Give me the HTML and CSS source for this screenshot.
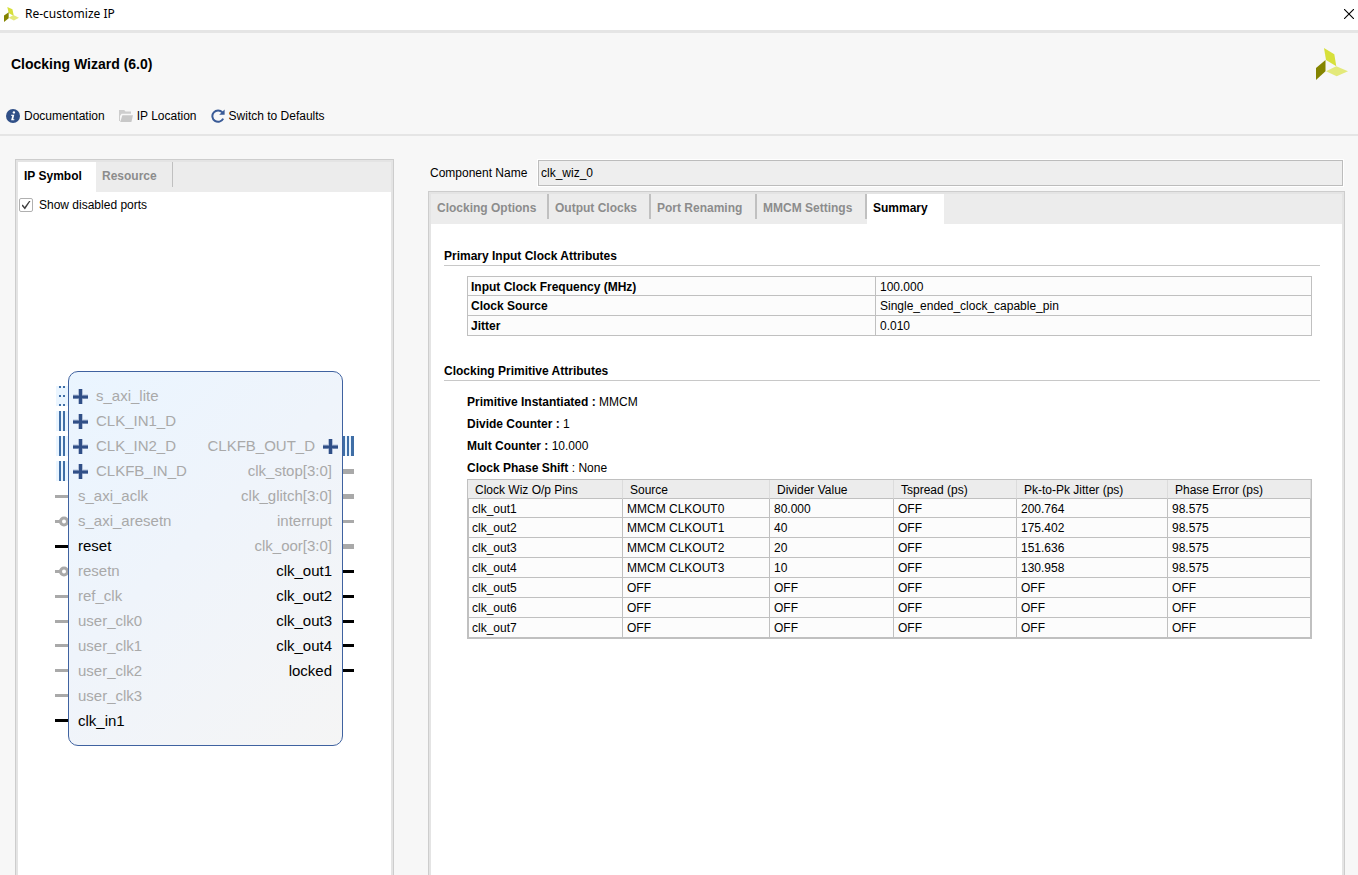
FILE: index.html
```html
<!DOCTYPE html>
<html lang="en">
<head>
<meta charset="utf-8">
<title>Re-customize IP</title>
<link rel="stylesheet" href="styles.css">
</head>
<body>
<div class="dialog">
  <div class="titlebar">
    <svg class="titlebar-logo" viewBox="0 0 32 32" aria-hidden="true">
      <polygon fill="#d7e03b" points="7,0 18,5 21,19 10,13"/>
      <polygon fill="#848400" points="0,18 10,11 10,24 0,32"/>
      <polygon fill="#e3e97a" points="10,23 20,17 32,23 21,29"/>
    </svg>
    <span class="titlebar-text">Re-customize IP</span>
    <button class="close" type="button" aria-label="Close">
      <svg viewBox="0 0 10 10" width="10" height="10"><path d="M0 0L10 10M10 0L0 10" stroke="#000" stroke-width="1.1" fill="none"/></svg>
    </button>
  </div>

  <header class="header">
    <div class="header-top">
      <h1 class="title">Clocking Wizard (6.0)</h1>
      <svg class="logo" viewBox="0 0 32 32" aria-hidden="true">
        <polygon fill="#d7e03b" points="8,0 18.3,6.3 20.3,18.3 10,12"/>
        <polygon fill="#848400" points="0,20 9.5,12 9.5,23.3 0,32"/>
        <polygon fill="#e3e97a" points="10,23.3 20.3,18.3 32,23.3 20.7,28.3"/>
      </svg>
    </div>
    <div class="toolbar">
      <button class="tool" type="button">
        <svg viewBox="0 0 14 14" width="14" height="14" aria-hidden="true">
          <circle cx="7" cy="7" r="7" fill="#304f87"/>
          <circle cx="7.9" cy="3.4" r="1.2" fill="#fff"/>
          <path d="M5.2 5.7H8.3L7.2 10.2H8.4L8.2 11.2H5.1L6.3 6.7H5z" fill="#fff"/>
        </svg>
        <span>Documentation</span>
      </button>
      <button class="tool" type="button">
        <svg viewBox="0 0 14 14" width="14" height="14" aria-hidden="true">
          <path d="M0 1H5.2L6.5 2.5H12V4.8H2.6L1 7V12H0z" fill="#cdcdcd"/>
          <path d="M3.4 6.2H14L12.4 13H1.2z" fill="#c8c8c8"/>
        </svg>
        <span>IP Location</span>
      </button>
      <button class="tool" type="button">
        <svg viewBox="0 0 14 14" width="14" height="14" aria-hidden="true">
          <path d="M11.4 3.4A5.7 5.7 0 1 0 12.2 9.6" fill="none" stroke="#3a5b97" stroke-width="2"/>
          <path d="M13.6 0.4V5.8H8.2z" fill="#3a5b97"/>
        </svg>
        <span>Switch to Defaults</span>
      </button>
    </div>
  </header>

  <main class="main">
    <section class="panel side">
      <div class="tabs side-tabs" role="tablist">
        <button class="tab active" type="button" role="tab" aria-selected="true">IP Symbol</button>
        <button class="tab" type="button" role="tab" aria-selected="false">Resource</button>
      </div>
      <div class="show-ports">
        <input class="check" type="checkbox" id="show-disabled" checked>
        <label for="show-disabled">Show disabled ports</label>
      </div>

      <div class="symbol">
        <svg class="pins" viewBox="0 0 13 375" width="13" height="375" aria-hidden="true">
          <g fill="#eaf5ff">
            <rect x="1" y="15" width="12" height="20"/><rect x="1" y="40" width="12" height="20"/>
            <rect x="1" y="65" width="12" height="20"/><rect x="1" y="90" width="12" height="20"/>
          </g>
          <g fill="#3f6ea6">
            <rect x="4" y="15" width="2" height="2"/><rect x="8" y="15" width="2" height="2"/>
            <rect x="4" y="24" width="2" height="2"/><rect x="8" y="24" width="2" height="2"/>
            <rect x="4" y="33" width="2" height="2"/><rect x="8" y="33" width="2" height="2"/>
            <rect x="4" y="40" width="2" height="20"/><rect x="8" y="40" width="2" height="20"/>
            <rect x="4" y="65" width="2" height="20"/><rect x="8" y="65" width="2" height="20"/>
            <rect x="4" y="90" width="2" height="20"/><rect x="8" y="90" width="2" height="20"/>
          </g>
          <g fill="#a9a9a9">
            <rect y="124" width="13" height="3"/><rect y="149" width="5" height="3"/>
            <rect y="199" width="5" height="3"/><rect y="224" width="13" height="3"/>
            <rect y="249" width="13" height="3"/><rect y="273" width="13" height="3"/>
            <rect y="298" width="13" height="3"/><rect y="323" width="13" height="3"/>
          </g>
          <g fill="#fff" stroke="#a9a9a9" stroke-width="3">
            <circle cx="9" cy="150.5" r="3.5"/><circle cx="9" cy="200.5" r="3.5"/>
          </g>
          <rect y="174" width="13" height="3"/><rect y="348" width="13" height="3"/>
        </svg>
        <div class="block">
          <ul class="ports">
            <li class="port bus"><svg class="plus" viewBox="0 0 15 15"><path d="M5 0H10V15H5z" fill="#b4c2da"/><path d="M0 5.5H15V10H0z" fill="#b4c2da"/><path d="M6 0H9V15H6zM0 6.5H15V9.5H0z" fill="#304f87"/></svg><span>s_axi_lite</span></li>
            <li class="port bus"><svg class="plus" viewBox="0 0 15 15"><path d="M5 0H10V15H5z" fill="#b4c2da"/><path d="M0 5.5H15V10H0z" fill="#b4c2da"/><path d="M6 0H9V15H6zM0 6.5H15V9.5H0z" fill="#304f87"/></svg><span>CLK_IN1_D</span></li>
            <li class="port bus"><svg class="plus" viewBox="0 0 15 15"><path d="M5 0H10V15H5z" fill="#b4c2da"/><path d="M0 5.5H15V10H0z" fill="#b4c2da"/><path d="M6 0H9V15H6zM0 6.5H15V9.5H0z" fill="#304f87"/></svg><span>CLK_IN2_D</span></li>
            <li class="port bus"><svg class="plus" viewBox="0 0 15 15"><path d="M5 0H10V15H5z" fill="#b4c2da"/><path d="M0 5.5H15V10H0z" fill="#b4c2da"/><path d="M6 0H9V15H6zM0 6.5H15V9.5H0z" fill="#304f87"/></svg><span>CLKFB_IN_D</span></li>
            <li class="port"><span>s_axi_aclk</span></li>
            <li class="port"><span>s_axi_aresetn</span></li>
            <li class="port on"><span>reset</span></li>
            <li class="port"><span>resetn</span></li>
            <li class="port"><span>ref_clk</span></li>
            <li class="port"><span>user_clk0</span></li>
            <li class="port"><span>user_clk1</span></li>
            <li class="port"><span>user_clk2</span></li>
            <li class="port"><span>user_clk3</span></li>
            <li class="port on"><span>clk_in1</span></li>
          </ul>
          <ul class="ports outputs">
            <li class="port bus"><span>CLKFB_OUT_D</span><svg class="plus" viewBox="0 0 15 15"><path d="M5 0H10V15H5z" fill="#b4c2da"/><path d="M0 5.5H15V10H0z" fill="#b4c2da"/><path d="M6 0H9V15H6zM0 6.5H15V9.5H0z" fill="#304f87"/></svg></li>
            <li class="port"><span>clk_stop[3:0]</span></li>
            <li class="port"><span>clk_glitch[3:0]</span></li>
            <li class="port"><span>interrupt</span></li>
            <li class="port"><span>clk_oor[3:0]</span></li>
            <li class="port on"><span>clk_out1</span></li>
            <li class="port on"><span>clk_out2</span></li>
            <li class="port on"><span>clk_out3</span></li>
            <li class="port on"><span>clk_out4</span></li>
            <li class="port on"><span>locked</span></li>
          </ul>
        </div>
        <svg class="pins" viewBox="0 0 11 375" width="11" height="375" aria-hidden="true">
          <rect y="65" width="11" height="20" fill="#eaf5ff"/>
          <g fill="#3f6ea6">
            <rect y="65" width="2" height="20"/><rect x="4" y="65" width="2" height="20"/><rect x="8" y="65" width="3" height="20"/>
          </g>
          <g fill="#a9a9a9">
            <rect y="98" width="11" height="5"/><rect y="123" width="11" height="5"/>
            <rect y="149" width="11" height="3"/><rect y="173" width="11" height="5"/>
          </g>
          <rect y="199" width="11" height="3"/><rect y="224" width="11" height="3"/>
          <rect y="249" width="11" height="3"/><rect y="273" width="11" height="3"/>
          <rect y="298" width="11" height="3"/>
        </svg>
      </div>
    </section>

    <div class="config">
      <div class="name-row">
        <label for="component-name">Component Name</label>
        <input class="name-input" type="text" id="component-name" value="clk_wiz_0" readonly>
      </div>
      <section class="panel pages">
        <div class="tabs page-tabs" role="tablist">
          <button class="tab" type="button" role="tab" aria-selected="false">Clocking Options</button>
          <button class="tab" type="button" role="tab" aria-selected="false">Output Clocks</button>
          <button class="tab" type="button" role="tab" aria-selected="false">Port Renaming</button>
          <button class="tab" type="button" role="tab" aria-selected="false">MMCM Settings</button>
          <button class="tab active" type="button" role="tab" aria-selected="true">Summary</button>
        </div>
        <div class="summary">
          <h2 class="heading">Primary Input Clock Attributes</h2>
          <table class="attrs">
            <tbody>
              <tr><th scope="row">Input Clock Frequency (MHz)</th><td>100.000</td></tr>
              <tr><th scope="row">Clock Source</th><td>Single_ended_clock_capable_pin</td></tr>
              <tr><th scope="row">Jitter</th><td>0.010</td></tr>
            </tbody>
          </table>

          <h2 class="heading">Clocking Primitive Attributes</h2>
          <ul class="facts">
            <li><b>Primitive Instantiated :</b> MMCM</li>
            <li><b>Divide Counter :</b> 1</li>
            <li><b>Mult Counter :</b> 10.000</li>
            <li><b>Clock Phase Shift</b> : None</li>
          </ul>
          <table class="pins-table">
            <colgroup>
              <col class="col-pin"><col class="col-source"><col class="col-divider"><col class="col-spread"><col class="col-jitter"><col>
            </colgroup>
            <thead>
              <tr><th scope="col">Clock Wiz O/p Pins</th><th scope="col">Source</th><th scope="col">Divider Value</th><th scope="col">Tspread (ps)</th><th scope="col">Pk-to-Pk Jitter (ps)</th><th scope="col">Phase Error (ps)</th></tr>
            </thead>
            <tbody>
              <tr><td>clk_out1</td><td>MMCM CLKOUT0</td><td>80.000</td><td>OFF</td><td>200.764</td><td>98.575</td></tr>
              <tr><td>clk_out2</td><td>MMCM CLKOUT1</td><td>40</td><td>OFF</td><td>175.402</td><td>98.575</td></tr>
              <tr><td>clk_out3</td><td>MMCM CLKOUT2</td><td>20</td><td>OFF</td><td>151.636</td><td>98.575</td></tr>
              <tr><td>clk_out4</td><td>MMCM CLKOUT3</td><td>10</td><td>OFF</td><td>130.958</td><td>98.575</td></tr>
              <tr><td>clk_out5</td><td>OFF</td><td>OFF</td><td>OFF</td><td>OFF</td><td>OFF</td></tr>
              <tr><td>clk_out6</td><td>OFF</td><td>OFF</td><td>OFF</td><td>OFF</td><td>OFF</td></tr>
              <tr><td>clk_out7</td><td>OFF</td><td>OFF</td><td>OFF</td><td>OFF</td><td>OFF</td></tr>
            </tbody>
          </table>
        </div>
      </section>
    </div>
  </main>
</div>
</body>
</html>
```

FILE: styles.css
```css
* {
  box-sizing: border-box;
}

body {
  margin: 0;
  background: #f7f7f7;
  color: #000;
  font: 12px/16px "Liberation Sans", Arial, sans-serif;
}

button,
input {
  font: inherit;
  color: inherit;
}

button {
  padding: 0;
  border: 0;
  background: none;
}

ul {
  margin: 0;
  padding: 0;
  list-style: none;
}

svg {
  display: block;
  flex: none;
}

.dialog {
  display: flex;
  flex-direction: column;
  min-height: 100vh;
}

/* Title bar */
.titlebar {
  display: flex;
  align-items: center;
  height: 33px;
  padding: 0 4px 2px;
  background: #fff;
  border-bottom: 3px solid #e5e5e5;
}

.titlebar-logo {
  width: 15px;
  height: 15px;
  margin-right: 6px;
}

.titlebar-text {
  font-family: "Noto Sans", "Open Sans", sans-serif;
}

.close {
  margin-left: auto;
}

/* Header */
.header {
  border-bottom: 2px solid #e5e5e5;
}

.header-top {
  display: flex;
  justify-content: space-between;
  align-items: center;
  padding: 15px 10px 0 11px;
}

.title {
  margin: 0;
  font-size: 14px;
}

.logo {
  width: 32px;
  height: 32px;
}

.toolbar {
  display: flex;
  gap: 14px;
  padding: 28px 6px 10px;
}

.tool {
  display: flex;
  align-items: center;
  gap: 4px;
}

/* Panels and tabs */
.main {
  display: flex;
  flex: 1;
  gap: 34px;
  padding: 23px 13px 0 15px;
}

.panel {
  display: flex;
  flex-direction: column;
  background: #fff;
  border: 1px solid #cdcdcd;
  border-bottom: 0;
  box-shadow: inset 2px 2px #e4e4e4, inset -2px 0 #e4e4e4;
  padding: 2px 2px 0;
}

.side {
  flex: 0 0 379px;
}

.tabs {
  display: grid;
  height: 30px;
  background: #ececec;
}

.side-tabs {
  grid-template-columns: 78px 77px;
}

.page-tabs {
  grid-template-columns: 118px 102px 106px 110px 77px;
}

.tab {
  height: 25px;
  padding: 2px 0 0 6px;
  border-right: 2px solid #c0c0c0;
  color: #8c8c8c;
  font-weight: bold;
  text-align: left;
  white-space: nowrap;
}

.side-tabs .tab {
  border-right-width: 1px;
}

.tabs .tab.active {
  height: 30px;
  padding-bottom: 4px;
  border-right: 0;
  background: #fff;
  color: #000;
}

/* IP symbol */
.show-ports {
  display: flex;
  align-items: center;
  gap: 6px;
  padding: 5px 1px;
}

.check {
  appearance: none;
  display: grid;
  place-items: center;
  width: 14px;
  height: 14px;
  margin: 0;
  border: 1px solid #b0b0b0;
  border-radius: 2px;
  background: #fff;
}

.check:checked::before {
  content: "";
  width: 9px;
  height: 9px;
  background: #404040;
  clip-path: polygon(0 55%, 14% 45%, 35% 72%, 88% 0, 100% 6%, 38% 100%);
}

.symbol {
  display: flex;
  justify-content: center;
  margin-top: 153px;
}

.block {
  display: flex;
  justify-content: space-between;
  width: 275px;
  height: 375px;
  padding-top: 12px;
  border: 1px solid #3f62a0;
  border-radius: 10px;
  background: linear-gradient(135deg, #eaf5ff, #eff4fb 45%, #f5f5f5);
}

.port {
  display: flex;
  align-items: center;
  gap: 8px;
  height: 25px;
  padding: 0 10px 0 9px;
  color: #a9a9a9;
  font-size: 15px;
}

.port span {
  padding-bottom: 2px;
}

.port.bus {
  padding: 0 4px;
}

.port.on {
  color: #000;
}

.outputs {
  padding-top: 50px;
}

.outputs .port {
  justify-content: flex-end;
}

.plus {
  width: 15px;
  height: 15px;
}

/* Configuration */
.config {
  display: flex;
  flex: 1;
  flex-direction: column;
  gap: 5px;
  min-width: 0;
  padding-top: 1px;
}

.name-row {
  display: flex;
  align-items: center;
  padding: 0 2px;
}

.name-row label {
  flex: 0 0 108px;
}

.name-input {
  flex: 1;
  min-width: 0;
  height: 26px;
  padding: 0 2px;
  border: 1px solid #bcbcbc;
  background: #eee;
  outline: 1px solid #fff;
}

.pages {
  flex: 1;
}

.summary {
  padding: 24px 22px 0 13px;
}

.heading {
  height: 18px;
  margin: 0;
  border-bottom: 1px solid #c8c8c8;
  font-size: 12px;
  line-height: 16px;
}

table {
  border-spacing: 0;
  table-layout: fixed;
}

th,
td {
  padding: 2px 0 0 4px;
  border: solid #c0c0c0;
  border-width: 0 1px 1px 0;
  background: #fcfcfc;
  line-height: 17px;
  text-align: left;
}

.attrs,
.pins-table {
  width: calc(100% - 31px);
  margin-left: 23px;
}

.attrs {
  margin-top: 10px;
  margin-bottom: 27px;
  border: solid #c0c0c0;
  border-width: 1px 0 0 1px;
}

.attrs th {
  width: 408px;
  padding-left: 3px;
}

.attrs tr:first-child > *,
.pins-table tbody tr:first-child td {
  line-height: 16px;
}

.facts {
  margin-top: 10px;
  margin-left: 23px;
  line-height: 22px;
}

.pins-table {
  border: 1px solid #c0c0c0;
}

.pins-table thead th {
  padding: 3px 0 0 7px;
  border-right-color: #dcdcdc;
  background: #ececec;
  font-weight: normal;
  line-height: 15px;
}

.pins-table tbody td:first-child {
  padding-left: 3px;
  border-left-width: 1px;
}

.col-pin {
  width: 155px;
}

.col-source {
  width: 147px;
}

.col-divider {
  width: 124px;
}

.col-spread {
  width: 123px;
}

.col-jitter {
  width: 151px;
}
```
